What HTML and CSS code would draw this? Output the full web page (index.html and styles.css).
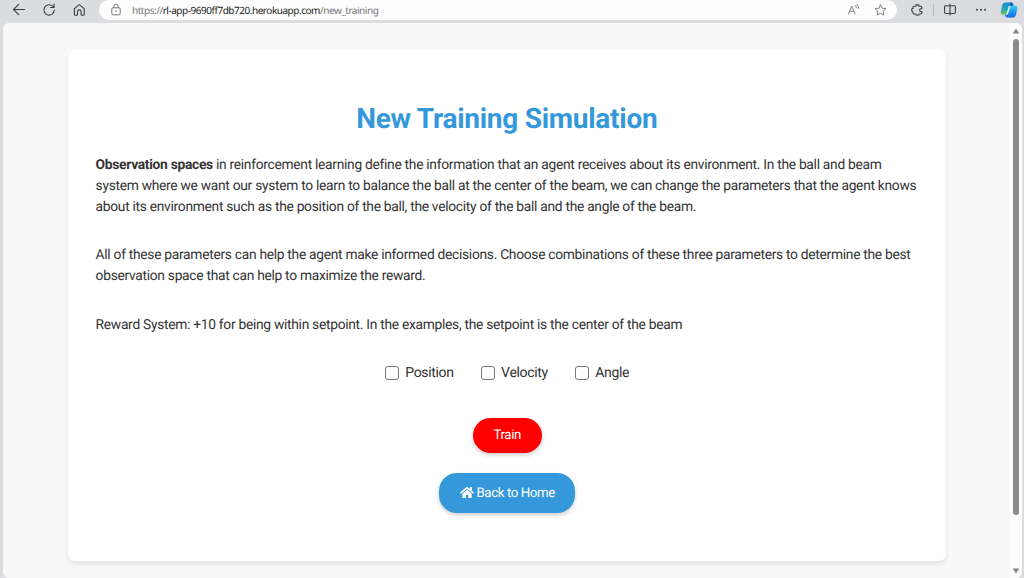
FILE: index.html
```html
<!DOCTYPE html>
<html lang="en">
<head>
<meta charset="utf-8">
<title>New Training Simulation</title>
<link rel="stylesheet" href="styles.css">
</head>
<body>
<header class="toolbar">
  <nav class="nav">
    <svg class="icon" viewBox="0 0 14 14"><path d="M12.5 6.5h-11M6.7 1.3 1.5 6.5l5.2 5.2"/></svg>
    <svg class="icon" viewBox="0 0 14 14"><path d="M12.3 7.1A5.2 5.2 0 1 1 10.7 3.2L12 4.5M12.1 1v3.5H8.6"/></svg>
    <svg class="icon" viewBox="0 0 14 14"><path d="M2.4 5.7 7.3 1.6 12.2 5.7v5.8q0 .7-.7.7H9.8q-.7 0-.7-.7V8.7a1.8 1.8 0 0 0-3.6 0v2.8q0 .7-.7.7H3.1q-.7 0-.7-.7Z"/></svg>
  </nav>
  <div class="address">
    <svg class="lock" viewBox="0 0 12 14"><rect x="1.8" y="4.8" width="8.4" height="7" rx="1.2"/><path d="M3.8 4.8V3.4a2.2 2.2 0 0 1 4.4 0v1.4"/><circle class="dot" cx="6" cy="8.3" r=".8"/></svg>
    <div class="url">https://<span class="host">rl-app-9690ff7db720.herokuapp.com</span>/new_training</div>
    <svg class="soft-icon" viewBox="0 0 14 14"><path d="M1.5 11 4.8 3l3.3 8M2.7 8.3h4.2M8.3 2.4q1.1 1 1 2.5M10 1.4q1.9 1.6 1.6 4"/></svg>
    <svg class="soft-icon" viewBox="0 0 14 14"><path d="m6.5 1.7 1.6 3.5 3.9.4-2.9 2.6.8 3.9-3.4-1.9-3.4 1.9.8-3.9L1 5.6l3.9-.4Z"/></svg>
  </div>
  <div class="tools">
    <svg class="icon" viewBox="0 0 14 14"><path d="M4.1 3.2h1.6q0-1.6 1.7-1.6t1.7 1.6h1.5q1.2 0 1.2 1.2v1.3q-2.2-.4-2.2 1.4t2.2 1.4v1.3q0 1.2-1.2 1.2H9.1q0 1.3-1.7 1.3T5.7 11H4.1q-1.2 0-1.2-1.2V8.6q-1.3 0-1.3-1.6t1.3-1.6v-1q0-1.2 1.2-1.2Z"/></svg>
    <span class="divider"></span>
    <svg class="icon" viewBox="0 0 14 14"><path d="M5.4 2.7H2.8q-1.2 0-1.2 1.2v5.4q0 1.2 1.2 1.2h2.6M8.6 2.7h2.6q1.2 0 1.2 1.2v5.4q0 1.2-1.2 1.2H8.6M5.4 2.7h3.2M5.4 10.5h3.2M7 1.4v10.6"/></svg>
    <svg class="icon more" viewBox="0 0 14 14"><circle cx="3" cy="6.7" r=".95"/><circle cx="7" cy="6.7" r=".95"/><circle cx="11" cy="6.7" r=".95"/></svg>
    <svg class="copilot" viewBox="0 0 18 18">
      <defs>
        <linearGradient id="left" x1="0" y1="0" x2="0" y2="1"><stop offset="0" stop-color="#168bd0"/><stop offset=".5" stop-color="#20a6b5"/><stop offset="1" stop-color="#70c45a"/></linearGradient>
        <linearGradient id="right" x1="0" y1="0" x2="0" y2="1"><stop offset="0" stop-color="#35cfe0"/><stop offset=".5" stop-color="#239af2"/><stop offset="1" stop-color="#1265df"/></linearGradient>
      </defs>
      <path fill="url(#left)" d="M5.2 1.5h6q1.5 0 1.9 1.7l.4 1.4h-.9q-2 0-2.6 1.8l-1.6 5.4q-.7 2-2.7 2H3.2Q.3 13.8.9 10.6L2.2 4.1q.6-2.6 3-2.6Z"/>
      <path fill="url(#right)" d="M13 16.6H7.3q-1.6 0-2-1.6l-.4-1.2h.9q2 0 2.6-1.9l1.7-5.4q.6-1.9 2.5-1.9h2.2q3.1 0 2.5 3.1l-1.4 6.4q-.6 2.5-2.9 2.5Z"/>
      <path fill="#1455b9" d="M10 1.5h1.2q1.5 0 1.9 1.7l.4 1.4h-.9q-1.2 0-1.9.6Z"/>
      <path fill="#e4f5f7" d="M8.2 5.2h2.6q-.7.5-1 1.5l-1.6 5q-.4 1.4-1.3 2H5.6q.8-.7 1.2-2l1.6-5q.3-1-.2-1.5Z"/>
    </svg>
  </div>
</header>
<div class="viewport">
  <main class="page">
    <section class="card">
      <h1 class="title">New Training Simulation</h1>
      <p class="text"><strong>Observation spaces</strong> in reinforcement learning define the information that an agent receives about its environment. In the ball and beam<br>system where we want our system to learn to balance the ball at the center of the beam, we can change the parameters that the agent knows<br>about its environment such as the position of the ball, the velocity of the ball and the angle of the beam.</p>
      <p class="text">All of these parameters can help the agent make informed decisions. Choose combinations of these three parameters to determine the best<br>observation space that can help to maximize the reward.</p>
      <p class="text">Reward System: +10 for being within setpoint. In the examples, the setpoint is the center of the beam</p>
      <form class="form">
        <div class="options">
          <label class="option"><input class="check" type="checkbox">Position</label>
          <label class="option"><input class="check" type="checkbox">Velocity</label>
          <label class="option"><input class="check" type="checkbox">Angle</label>
        </div>
        <button class="button train" type="button">Train</button>
        <a class="button home"><svg class="house" viewBox="0 0 576 512"><path d="M280 148 96 300v164q0 16 16 16h112q16 0 16-16v-96q0-16 16-16h64q16 0 16 16v96q0 16 16 16h112q16 0 16-16V300L296 148q-8-6-16 0ZM572 251l-84-69V44q0-12-12-12h-56q-12 0-12 12v72L318 43q-30-24-60 0L4 251q-9 8-2 17l26 31q8 9 17 2L280 107q8-6 16 0l235 194q9 7 17-2l26-31q7-9-2-17Z"/></svg>Back to Home</a>
      </form>
    </section>
  </main>
  <div class="scrollbar">
    <svg class="arrow" viewBox="0 0 8 6"><path d="M4 .5 7.3 5.5H.7Z"/></svg>
    <span class="thumb"></span>
    <svg class="arrow" viewBox="0 0 8 6"><path d="M4 5.5.7.5h6.6Z"/></svg>
  </div>
</div>
</body>
</html>
```
FILE: styles.css
```css
* { box-sizing: border-box; }
body {
  margin: 0;
  height: 578px;
  overflow: hidden;
  display: flex;
  flex-direction: column;
  background: #dadcdf;
  font-family: Roboto, sans-serif;
  color: #333;
  text-rendering: geometricPrecision;
}
.toolbar { height: 23px; flex: none; display: flex; align-items: flex-start; }
.nav { width: 99px; display: flex; gap: 16px; padding: 3px 0 0 12px; }
.icon { width: 14px; height: 14px; flex: none; fill: none; stroke: #3d3f42; stroke-width: 1.1; stroke-linecap: round; stroke-linejoin: round; }
.address {
  width: 798px; height: 20px; display: flex; align-items: center;
  padding: 0 9px 0 11px; background: #fdfdfd; border-radius: 10px;
}
.lock { width: 12px; height: 14px; fill: none; stroke: #777; stroke-width: 1; }
.dot { fill: #777; stroke: none; }
.url { flex: 1; margin-left: 10px; font: 10px/20px "Noto Sans", sans-serif; letter-spacing: -.47px; color: #777; white-space: nowrap; }
.host { color: #222; }
.soft-icon { width: 14px; height: 14px; margin-left: 13px; fill: none; stroke: #777; stroke-width: .9; stroke-linecap: round; stroke-linejoin: round; }
.tools { flex: 1; display: flex; align-items: center; height: 20px; padding-left: 13px; }
.divider { width: 1px; height: 12px; margin: 0 9px; background: #b5b7b9; }
.more { margin-left: 17px; fill: #333; stroke: none; }
.copilot { width: 18px; height: 18px; margin-left: 12px; flex: none; }
.viewport {
  flex: 1; display: flex; margin: 0 2px 0 3px; background: #f8f8f8;
  border-radius: 6px; overflow: hidden;
}
.page { flex: 1; padding: 27px 0 0 65px; }
.card {
  width: 878px; height: 511px; padding: 50px 28px 0 27.6px; background: #fff;
  border-radius: 7px; box-shadow: 0 3px 5px rgba(0, 0, 0, .09);
}
.title { margin: 0 0 16.6px; font-size: 28px; line-height: 38px; font-weight: 700; letter-spacing: -.27px; color: #3498db; text-align: center; }
.text { margin: 0 0 27.6px; font-size: 13.8px; line-height: 21px; letter-spacing: -.29px; white-space: nowrap; }
.form { display: flex; flex-direction: column; align-items: center; padding-left: .8px; }
.options { display: flex; gap: 27.5px; height: 20px; margin-bottom: 34.6px; }
.option { display: flex; align-items: center; font-size: 14px; letter-spacing: -.34px; }
.check {
  appearance: none; width: 14px; height: 14px; margin: 0 6px 0 0;
  border: 1px solid #777; border-radius: 3px; background: #fff;
}
.button {
  display: flex; align-items: center; justify-content: center; border: 0; color: #fff;
  font: 13.3px/1 Roboto, sans-serif; letter-spacing: -.42px; box-shadow: 0 2px 4px rgba(0, 0, 0, .2);
}
.train { width: 69px; height: 35px; margin-bottom: 20px; border-radius: 18px; background: #f00; text-rendering: geometricPrecision; }
.home { width: 136px; height: 40px; padding-top: 1px; gap: 3px; border-radius: 18px; background: #3498db; }
.house { width: 14px; height: 13px; margin-top: -2px; fill: #fff; }
.scrollbar {
  width: 12px; flex: none; display: flex; flex-direction: column; align-items: center;
  padding: 5px 0 4px; background: #fcfcfc;
}
.arrow { width: 8px; height: 6px; fill: #858585; flex: none; }
.thumb { width: 6px; height: 476px; margin: 5px 0 auto; border-radius: 3px; background: #8b8b8b; }
```
